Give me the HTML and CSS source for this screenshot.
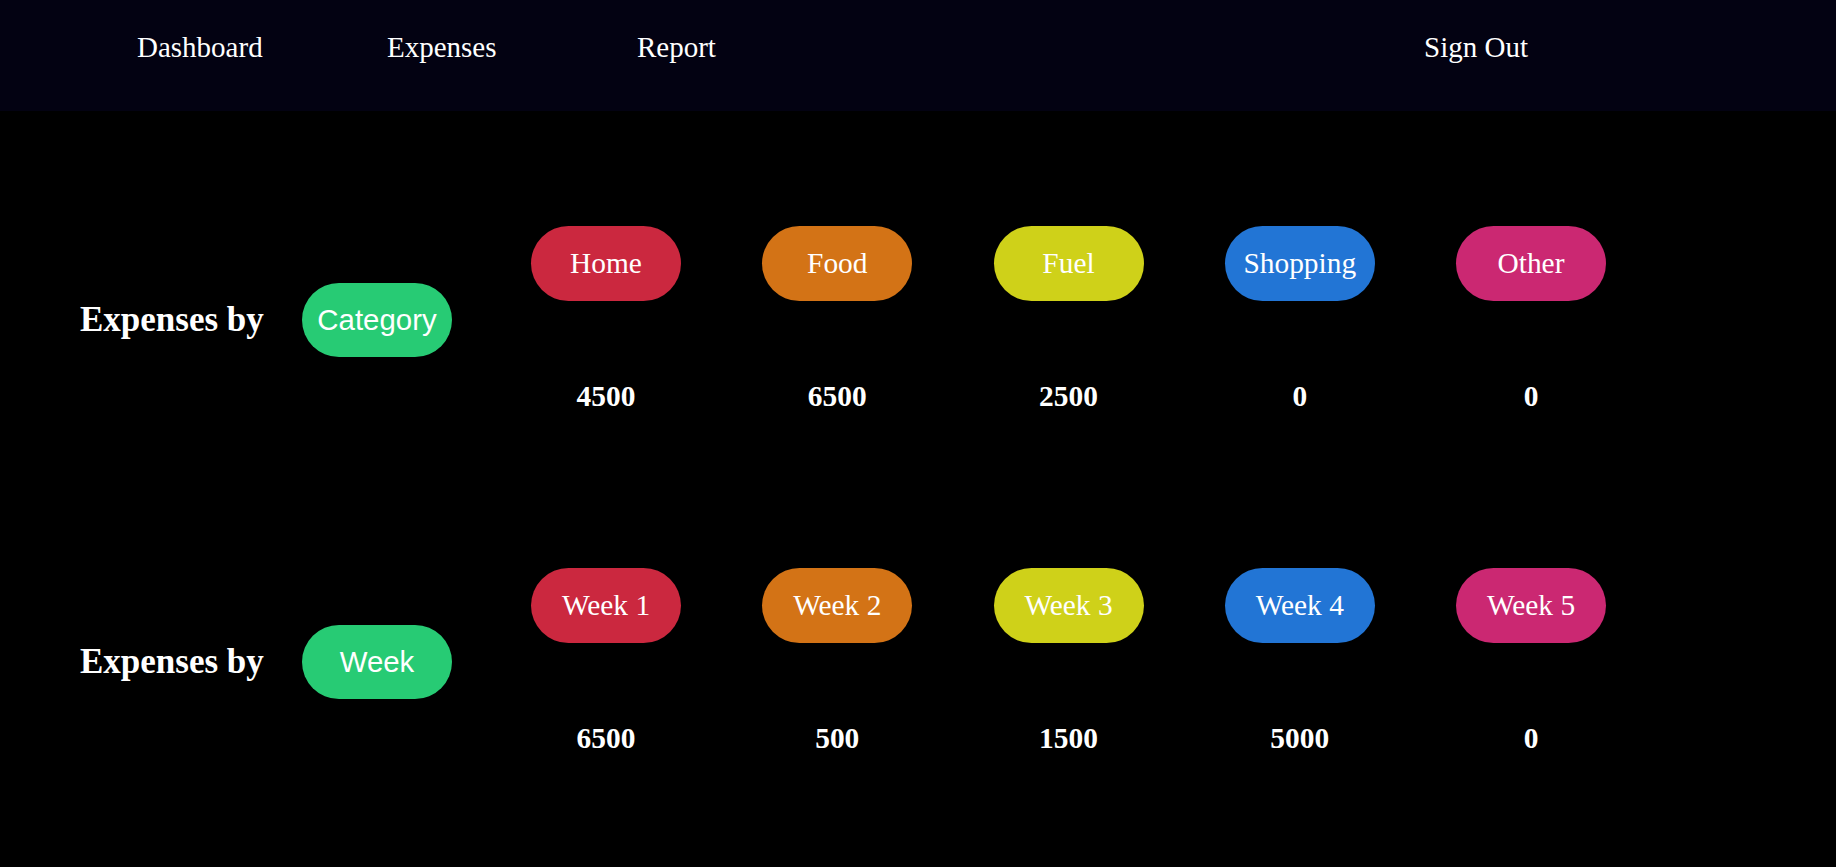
FILE: index.html
```html
<!DOCTYPE html>
<html lang="en">
<head>
<meta charset="utf-8">
<title>Expense Report</title>
<link rel="stylesheet" href="styles.css">
</head>
<body>
<nav class="navbar">
  <div class="nav-links">
    <a class="nav-link" href="#">Dashboard</a>
    <a class="nav-link" href="#">Expenses</a>
    <a class="nav-link" href="#">Report</a>
  </div>
  <a class="nav-signout" href="#">Sign Out</a>
</nav>
<main class="content">
  <section class="summary-row">
    <h2 class="summary-title">Expenses by</h2>
    <span class="pill pill-sans pill-green">Category</span>
    <div class="summary-grid">
      <div class="summary-item"><span class="pill pill-red">Home</span><span class="amount">4500</span></div>
      <div class="summary-item"><span class="pill pill-orange">Food</span><span class="amount">6500</span></div>
      <div class="summary-item"><span class="pill pill-yellow">Fuel</span><span class="amount">2500</span></div>
      <div class="summary-item"><span class="pill pill-blue">Shopping</span><span class="amount">0</span></div>
      <div class="summary-item"><span class="pill pill-pink">Other</span><span class="amount">0</span></div>
    </div>
  </section>
  <section class="summary-row">
    <h2 class="summary-title">Expenses by</h2>
    <span class="pill pill-sans pill-green">Week</span>
    <div class="summary-grid">
      <div class="summary-item"><span class="pill pill-red">Week 1</span><span class="amount">6500</span></div>
      <div class="summary-item"><span class="pill pill-orange">Week 2</span><span class="amount">500</span></div>
      <div class="summary-item"><span class="pill pill-yellow">Week 3</span><span class="amount">1500</span></div>
      <div class="summary-item"><span class="pill pill-blue">Week 4</span><span class="amount">5000</span></div>
      <div class="summary-item"><span class="pill pill-pink">Week 5</span><span class="amount">0</span></div>
    </div>
  </section>
</main>
</body>
</html>
```
FILE: styles.css
```css
html, body {
  margin: 0;
  padding: 0;
}

body {
  background: #000;
  color: #fff;
  font-family: "Liberation Serif", "Times New Roman", serif;
}

.navbar {
  display: flex;
  align-items: flex-start;
  box-sizing: border-box;
  height: 111px;
  padding: 31px 0 0 137px;
  background: #030212;
}

.nav-links {
  display: flex;
}

.nav-link,
.nav-signout {
  display: block;
  color: #fff;
  text-decoration: none;
  font-size: 29px;
  line-height: normal;
}

.nav-link {
  width: 250px;
}

.nav-signout {
  margin-left: auto;
  width: 412px;
}

.content {
  display: flex;
  flex-direction: column;
  gap: 155px;
  padding: 115px 0 0 80px;
}

.summary-row {
  display: flex;
  align-items: center;
}

.summary-title {
  margin: 0;
  width: 222px;
  font-size: 35px;
  font-weight: bold;
  line-height: normal;
}

.summary-grid {
  display: grid;
  grid-template-columns: repeat(5, 150px);
  column-gap: 81.25px;
  margin-left: 79px;
}

.summary-item {
  display: flex;
  flex-direction: column;
  align-items: center;
}

.pill {
  display: flex;
  align-items: center;
  justify-content: center;
  width: 150px;
  height: 75px;
  border-radius: 37.5px;
  color: #fff;
  font-size: 29.4px;
  line-height: normal;
}

.pill-sans {
  font-family: "Liberation Sans", Arial, sans-serif;
  font-size: 29.4px;
  height: 74px;
  border-radius: 37px;
}

.pill-green { background: #27cb74; }
.pill-red { background: #cb283f; }
.pill-orange { background: #d37316; }
.pill-yellow { background: #cfd119; }
.pill-blue { background: #2275d5; }
.pill-pink { background: #cb2872; }

.amount {
  margin-top: 79px;
  font-size: 29.4px;
  font-weight: bold;
  line-height: 33px;
}
```
